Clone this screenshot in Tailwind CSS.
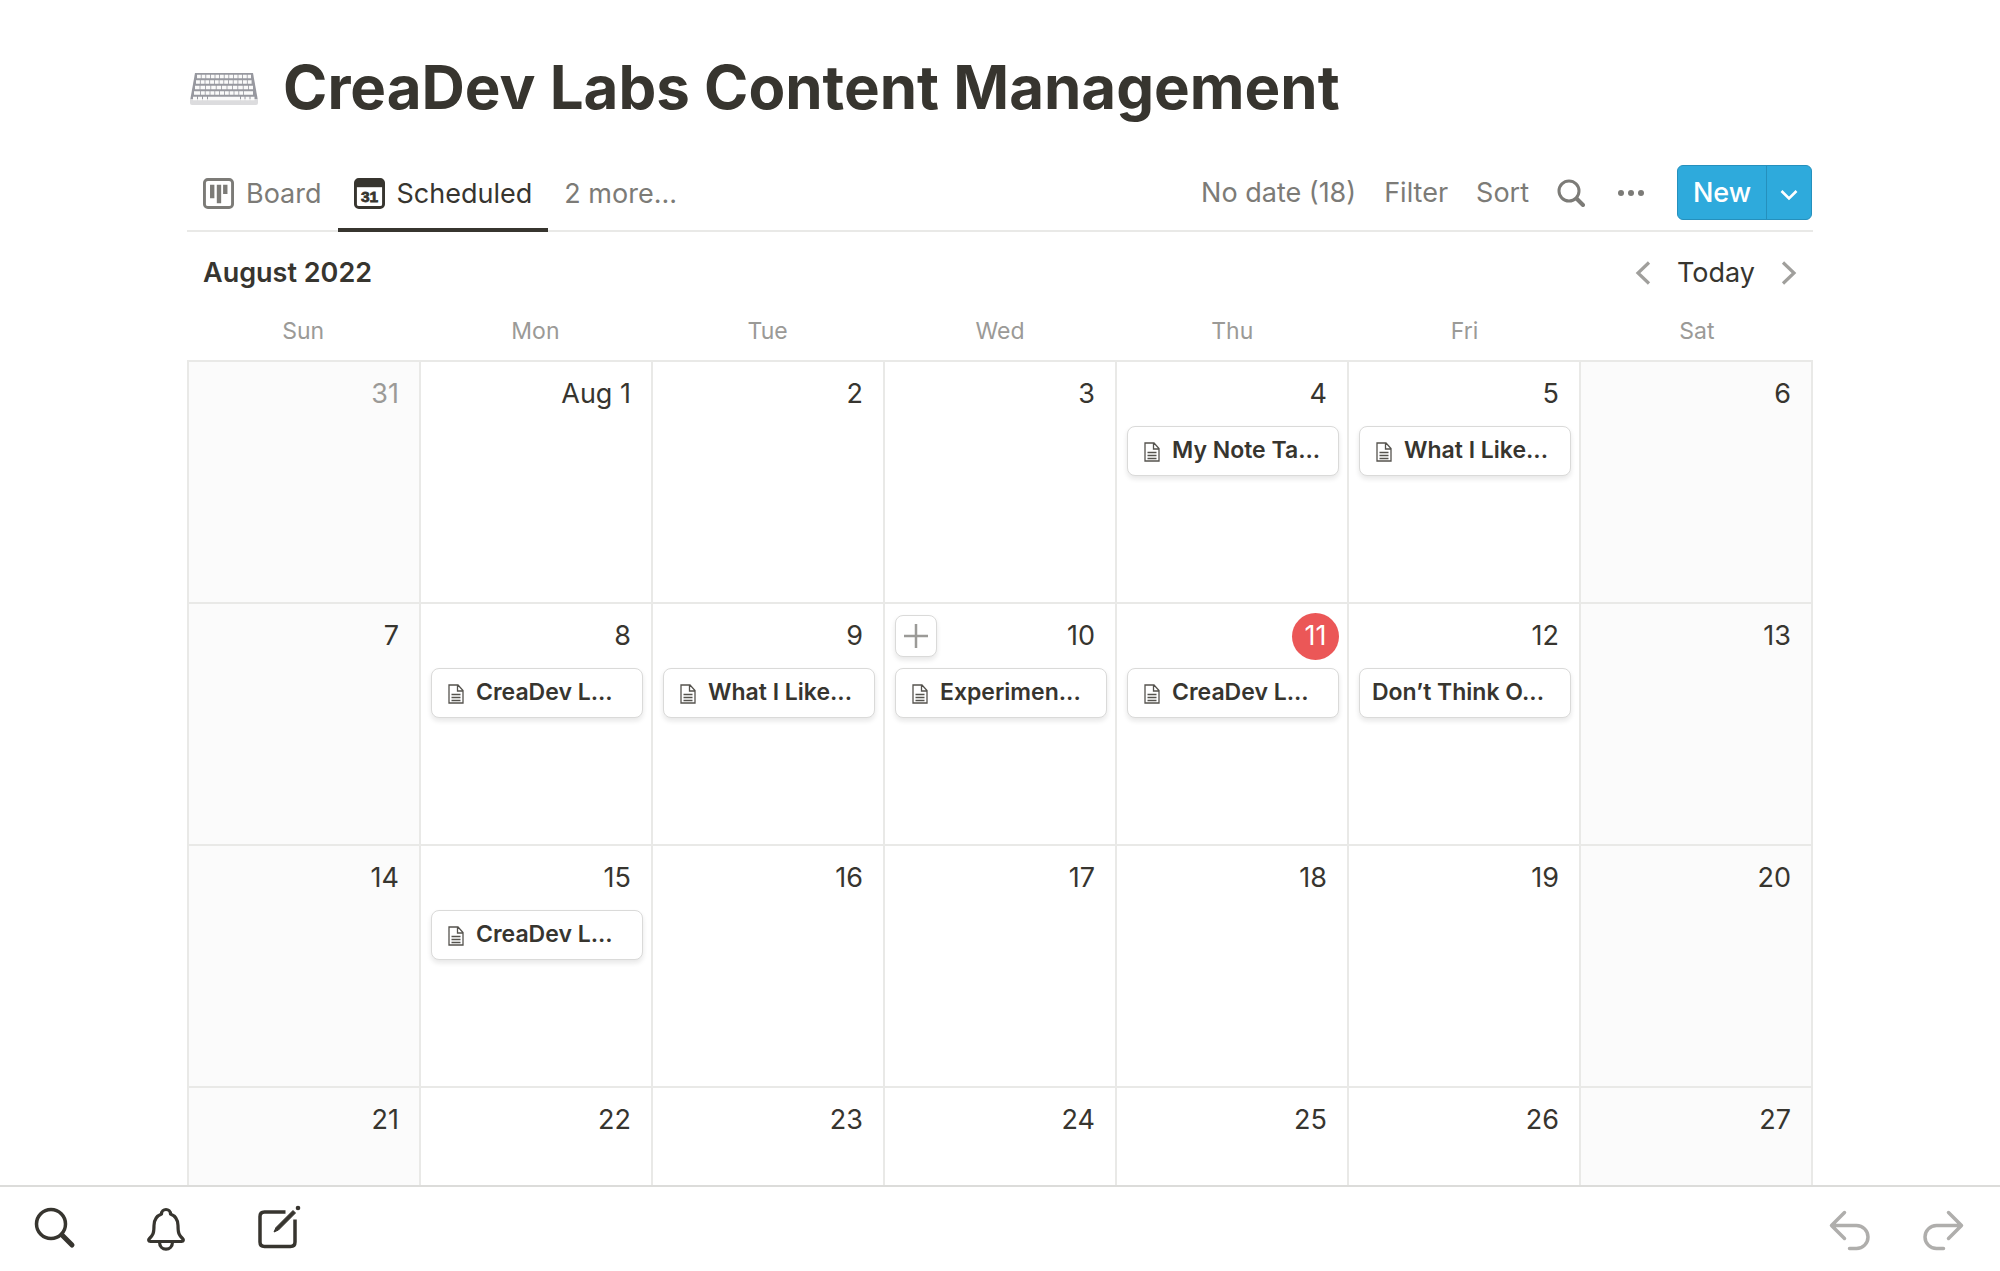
<!DOCTYPE html>
<html lang="en">
<head>
    <meta charset="UTF-8">
    <meta name="viewport" content="width=device-width, initial-scale=1.0">
    <title>CreaDev Labs Content Management</title>
    <script src="https://cdn.jsdelivr.net/npm/@tailwindcss/browser@4"></script>
</head>
<body class="flex h-screen flex-col overflow-hidden bg-white font-['Inter',sans-serif] text-[27px] leading-8 text-[#37352f]">
    <svg class="hidden">
        <symbol id="page" viewBox="0 0 16 20">
            <path d="M1 1h9l5 5.500V19H1zM9.500 1v6H15M3.500 10.500h9M3.500 13.500h9M3.500 16.500h9" fill="none" stroke="currentColor" stroke-width="1.300"/>
        </symbol>
    </svg>

    <main class="min-h-0 flex-1 overflow-hidden px-[187px] pt-[47px]">
        <header class="flex h-20 items-center gap-6">
            <svg class="mt-1 h-8 w-[72px]" viewBox="0 0 72 32">
                <path d="M8 0h58l5 28H3z" fill="#97989f"/>
                <path d="M3 26h68v4q0 2-2 2H5q-2 0-2-2z" fill="#dcdcde"/>
                <g fill="none" stroke="#fafafa" stroke-width="3.600">
                    <path d="M10 3.500h54" stroke-dasharray="3.800 .8"/>
                    <path d="M9 9h56" stroke-dasharray="3.900 .8"/>
                    <path d="M8 14.500h58" stroke-dasharray="4.600 .8"/>
                    <path d="M7 20h60" stroke-dasharray="6 .8 4 .8 4 .8 4 .8 4 .8 4 .8 4 .8 4 .8 4 .8 4 .8 9 9"/>
                    <path d="M6 25.500h4M11 25.500h4M16 25.500h4M21 25.500h32M54 25.500h3.500M58.500 25.500h4M63.500 25.500h4"/>
                </g>
            </svg>
            <h1 class="text-[60px] leading-none font-bold whitespace-nowrap">CreaDev Labs Content Management</h1>
        </header>

        <div class="mt-8 flex h-[73px] items-stretch justify-between border-b-2 border-[#e9e9e7]">
            <nav class="-mb-0.5 flex whitespace-nowrap">
                <button class="flex items-center gap-3 border-b-4 border-transparent px-4 text-[#7c7b77]">
                    <svg class="size-[31px]" viewBox="0 0 32 32">
                        <rect x="1.500" y="1.500" width="29" height="29" rx="3.500" fill="none" stroke="currentColor" stroke-width="3"/>
                        <path d="M9.500 7v14M16.500 7v19M23 7v9.500" stroke="currentColor" stroke-width="4.500"/>
                    </svg>
                    Board
                </button>
                <button class="flex items-center gap-3 border-b-4 border-[#37352f] px-4">
                    <svg class="size-[31px]" viewBox="0 0 32 32">
                        <rect x="1.500" y="1.500" width="29" height="29" rx="3.500" fill="none" stroke="currentColor" stroke-width="3"/>
                        <path d="M2 2h28v7.500H2z" fill="currentColor"/>
                        <text x="16" y="25" text-anchor="middle" font-size="16" font-weight="700" font-family="Liberation Sans" fill="currentColor" stroke="currentColor" stroke-width=".8">31</text>
                    </svg>
                    Scheduled
                </button>
                <button class="border-b-4 border-transparent px-4 text-[#7c7b77]">2 more...</button>
            </nav>
            <div class="flex items-center gap-7 pb-1 whitespace-nowrap text-[#7c7b77]">
                <button>No date (18)</button>
                <button>Filter</button>
                <button>Sort</button>
                <button aria-label="Search" class="mr-1">
                    <svg class="size-7" viewBox="0 0 28 28" fill="none" stroke="currentColor" stroke-width="3">
                        <circle cx="12" cy="12" r="10"/>
                        <path d="M19.500 19.500l6.500 6.500" stroke-width="4" stroke-linecap="round"/>
                    </svg>
                </button>
                <button aria-label="More">
                    <svg class="size-7" viewBox="0 0 28 28" fill="currentColor">
                        <circle cx="4" cy="14" r="3"/><circle cx="14" cy="14" r="3"/><circle cx="24" cy="14" r="3"/>
                    </svg>
                </button>
                <div class="mr-px ml-1 flex h-[55px] overflow-hidden rounded-md border border-[#2590bd] bg-[#2eaadc] text-white">
                    <button class="w-[88px] font-medium">New</button>
                    <button aria-label="New options" class="flex w-[45px] items-center justify-center border-l border-[#2590bd]">
                        <svg class="size-5" viewBox="0 0 20 20" fill="none" stroke="currentColor" stroke-width="2.600"><path d="M2.500 8l7.500 7.500L17.500 8"/></svg>
                    </button>
                </div>
            </div>
        </div>

        <div class="flex h-[82px] items-center justify-between px-4">
            <h2 class="font-semibold">August 2022</h2>
            <div class="flex items-center gap-[26px]">
                <button aria-label="Previous month" class="text-[#a09f9c]">
                    <svg class="h-6 w-4" viewBox="0 0 16 24" fill="none" stroke="currentColor" stroke-width="3.200"><path d="M14 1.500L3 12l11 10.500"/></svg>
                </button>
                <button>Today</button>
                <button aria-label="Next month" class="text-[#a09f9c]">
                    <svg class="h-6 w-4" viewBox="0 0 16 24" fill="none" stroke="currentColor" stroke-width="3.200"><path d="M2 1.500L13 12 2 22.500"/></svg>
                </button>
            </div>
        </div>

        <div class="grid h-[46px] grid-cols-7 pt-px text-center text-[23px] text-[#9b9a97]">
            <div>Sun</div><div>Mon</div><div>Tue</div><div>Wed</div><div>Thu</div><div>Fri</div><div>Sat</div>
        </div>

        <div id="calendar" class="grid grid-cols-7 border-t-2 border-l-2 border-[#e9e9e7]"></div>
    </main>

    <footer class="flex h-[86px] shrink-0 items-center justify-between border-t-2 border-[#dcdcda] bg-white px-8 pb-0.5">
        <div class="flex items-center gap-16">
            <button aria-label="Search">
                <svg class="size-12" viewBox="0 0 48 48" fill="none" stroke="currentColor" stroke-width="3.500" stroke-linecap="round">
                    <circle cx="19" cy="20" r="14.500"/><path d="M30 31l10 10" stroke-width="5"/>
                </svg>
            </button>
            <button aria-label="Notifications">
                <svg class="size-12" viewBox="0 0 48 48" fill="none" stroke="currentColor" stroke-width="3.200" stroke-linejoin="round">
                    <path d="M17.500 10c0-6 9-6 9 0 5 2 7.500 5 7.500 11.500 0 8 1 9.500 4.500 13 1.500 1.500 1 3-1 3h-31c-2 0-2.500-1.500-1-3 3.500-3.500 4.500-5 4.500-13 0-6.500 2.500-9.500 7.500-11.500z"/>
                    <path d="M15.500 38c0 9.500 13 9.500 13 0"/>
                </svg>
            </button>
            <button aria-label="New page">
                <svg class="size-12" viewBox="0 0 48 48" fill="none" stroke="currentColor" stroke-width="3.500">
                    <path d="M29.500 8H8.500Q4 8 4 12.500V38q0 4.500 4.500 4.500h26q4.500 0 4.500-4.500V15.500"/>
                    <path d="M37 6.500l2.500 2.500-17 17-4.500 2 2-4.500z" fill="currentColor" stroke-width="1"/>
                    <circle cx="42" cy="4" r="2.300" fill="currentColor" stroke="none"/>
                </svg>
            </button>
        </div>
        <div class="flex items-center gap-12 text-[#afaeac]">
            <button aria-label="Undo">
                <svg class="size-12" viewBox="0 0 48 48" fill="none" stroke="currentColor" stroke-width="3.500" stroke-linecap="round" stroke-linejoin="round">
                    <path d="M20.500 8.500L7.500 21.500l13 13M7.500 21.500h25a11.500 11.500 0 0 1 0 23h-7"/>
                </svg>
            </button>
            <button aria-label="Redo">
                <svg class="size-12" viewBox="0 0 48 48" fill="none" stroke="currentColor" stroke-width="3.500" stroke-linecap="round" stroke-linejoin="round">
                    <path d="M28.500 8.500l13 13-13 13M41.500 21.500h-25a11.500 11.500 0 0 0 0 23h7"/>
                </svg>
            </button>
        </div>
    </footer>

    <script>
        const days = ['31', 'Aug 1', ...Array.from({ length: 26 }, (_, i) => String(i + 2))];
        const entries = {
            '4': 'My Note Ta...',
            '5': 'What I Like...',
            '8': 'CreaDev L...',
            '9': 'What I Like...',
            '10': 'Experimen...',
            '11': 'CreaDev L...',
            '12': 'Don’t Think O...',
            '15': 'CreaDev L...'
        };
        const noIcon = ['12'];
        const box = 'rounded-lg border border-[#dadad9] bg-white shadow-[0_3px_5px_rgba(15,15,15,0.1)]';

        document.getElementById('calendar').innerHTML = days.map((day, i) => {
            const weekend = i % 7 === 0 || i % 7 === 6;
            const number = day === '11'
                ? '<span class="-mr-3 flex size-[47px] items-center justify-center rounded-full bg-[#eb5757] text-white">11</span>'
                : `<span class="${day === '31' ? 'text-[#9b9a97]' : ''}">${day}</span>`;
            const add = day === '10'
                ? `<button aria-label="Add page" class="flex size-[42px] items-center justify-center ${box}">
                       <svg class="size-6" viewBox="0 0 24 24" stroke="#9b9a97" stroke-width="2.500"><path d="M12 0v24M0 12h24"/></svg>
                   </button>`
                : '<span></span>';
            const icon = noIcon.includes(day)
                ? ''
                : '<svg class="mr-3 ml-1 mt-1 h-5 w-4 shrink-0 text-[#55534e]"><use href="#page"/></svg>';
            const card = entries[day]
                ? `<a href="#" class="flex h-[50px] items-center px-3 pb-0.5 text-[23px] font-semibold whitespace-nowrap ${box}">${icon}${entries[day]}</a>`
                : '';
            return `<div class="h-[242px] border-r-2 border-b-2 border-[#e9e9e7] pr-2 pl-2.5 ${weekend ? 'bg-[#fbfbfb]' : ''}">
                        <div class="flex h-16 items-center justify-between pr-3">${add}${number}</div>
                        ${card}
                    </div>`;
        }).join('');
    </script>
</body>
</html>
